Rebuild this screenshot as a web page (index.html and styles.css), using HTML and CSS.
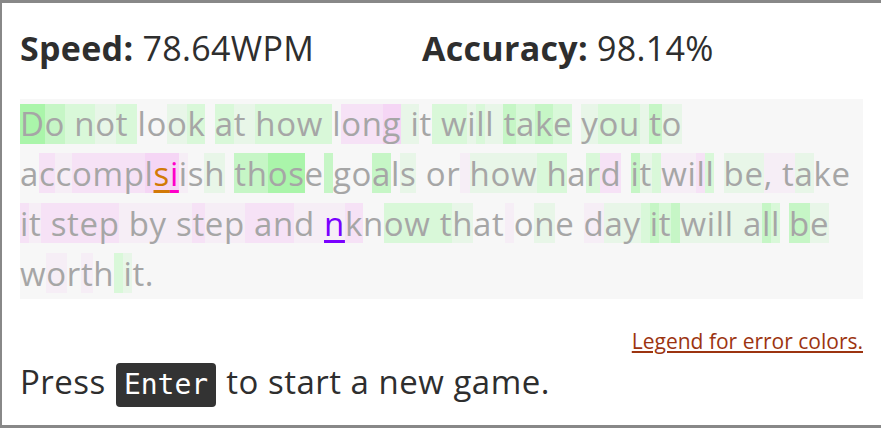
FILE: index.html
```html
<!DOCTYPE html>
<html lang="en">
<head>
<meta charset="utf-8">
<title>Typing game</title>
<link rel="stylesheet" href="styles.css">
</head>
<body>
<div class="frame">
  <div class="stats">
    <div><b>Speed:</b> 78.64WPM</div>
    <div><b>Accuracy:</b> 98.14%</div>
  </div>
  <div class="tx"><span class="a">D</span><span class="b">o</span><span class="c"> </span><span class="c">n</span><span class="d">o</span><span class="c">t</span><span class="c"> </span>lo<span class="d">o</span><span class="c">k</span> <span class="c">a</span><span class="d">t</span><span class="d"> </span><span class="c">h</span><span class="c">o</span><span class="c">w</span><span class="c"> </span>l<span class="p">o</span><span class="p">n</span><span class="q">g</span><span class="d"> </span><span class="d">i</span>t<span class="c"> </span><span class="c">w</span><span class="d">i</span><span class="c">l</span><span class="d">l</span><span class="d"> </span><span class="b">t</span><span class="c">a</span><span class="b">k</span><span class="c">e</span> <span class="d">y</span><span class="c">o</span><span class="c">u</span><span class="d"> </span><span class="b">t</span><span class="d">o</span> <br>a<span class="p">c</span><span class="r">c</span><span class="p">o</span><span class="p">m</span><span class="p">p</span><span class="q">l</span><span class="q e1">s</span><span class="q e2">i</span><span class="r">i</span>s<span class="d">h</span> <span class="b">t</span><span class="b">h</span><span class="a">o</span><span class="a">s</span>e<span class="b"> </span>go<span class="b">a</span>l<span class="d">s</span> or<span class="r"> </span><span class="d">h</span><span class="d">o</span><span class="d">w</span><span class="c"> </span><span class="c">h</span>a<span class="c">r</span><span class="p">d</span> <span class="b">i</span><span class="d">t</span><span class="c"> </span><span class="r">w</span><span class="r">i</span><span class="p">l</span><span class="c">l</span> <span class="d">b</span><span class="d">e</span><span class="r">,</span><span class="r"> </span><span class="r">t</span><span class="d">a</span>ke <br><span class="p">i</span><span class="r">t</span><span class="p"> </span><span class="p">s</span><span class="p">t</span><span class="p">e</span><span class="p">p</span><span class="r"> </span><span class="r">b</span><span class="r">y</span><span class="r"> </span><span class="r">s</span><span class="p">t</span><span class="r">e</span><span class="r">p</span><span class="p"> </span><span class="p">a</span><span class="p">n</span><span class="r">d</span><span class="r"> </span><span class="r e3">n</span><span class="p">k</span>n<span class="c">o</span><span class="c">w</span><span class="c"> </span><span class="c">t</span><span class="d">h</span>at<span class="r"> </span>o<span class="d">n</span>e <span class="r">d</span><span class="d">a</span><span class="d">y</span><span class="c"> </span><span class="b">i</span><span class="c">t</span><span class="b"> </span><span class="d">w</span><span class="d">i</span><span class="d">l</span><span class="d">l</span><span class="d"> </span><span class="d">a</span><span class="b">l</span><span class="c">l</span> <span class="b">b</span><span class="d">e</span> <br>w<span class="r">o</span>r<span class="r">t</span>h<span class="c"> </span><span class="d">i</span>t.</div>
  <div class="legend"><a href="#legend">Legend for error colors.</a></div>
  <div class="press">Press <kbd class="key">Enter</kbd> to start a new game.</div>
</div>
</body>
</html>
```
FILE: styles.css
```css
html, body {
  margin: 0;
  padding: 0;
  overflow: hidden;
  background: #fff;
}
.frame {
  box-sizing: border-box;
  width: 881px;
  height: 428px;
  border: solid #888;
  border-width: 3px 0 3px 2px;
  padding: 22px 18px 0 18px;
  font-family: "Open Sans", "Noto Sans", sans-serif;
  color: #2e2e2e;
}
.stats {
  display: grid;
  grid-template-columns: 402px auto;
  font-size: 34px;
  line-height: 46px;
  letter-spacing: 0.3px;
  height: 46px;
}
.stats b {
  font-weight: 700;
}
.tx {
  margin-top: 28px;
  height: 200px;
  background: #f7f7f7;
  font-size: 33px;
  line-height: 50px;
  letter-spacing: 0.65px;
  color: #a6a6a6;
  white-space: nowrap;
}
.tx span {
  background-image: linear-gradient(to bottom, transparent 2.5px, var(--bg) 2.5px, var(--bg) calc(100% - 2.5px), transparent calc(100% - 2.5px));
}
.a { --bg: #aaf5aa; }
.b { --bg: #c6f6c6; }
.c { --bg: #d9f8d9; }
.d { --bg: #e8f6e8; }
.p { --bg: #f6e2f6; }
.q { --bg: #f5d6f5; }
.r { --bg: #f6eef6; }
.e1, .e2, .e3 {
  text-decoration-line: underline;
  text-decoration-thickness: 3px;
  text-underline-offset: 4px;
}
.e1 { color: #d27a06; }
.e2 { color: #ff00c8; }
.e3 { color: #7a00ff; }
.legend {
  margin-top: 27px;
  text-align: right;
  font-size: 21px;
  line-height: 30px;
}
.legend a {
  color: #9c3410;
  text-decoration: underline;
  text-underline-offset: 2px;
}
.press {
  margin-top: 4px;
  font-size: 33px;
  line-height: 44px;
  letter-spacing: 0.5px;
}
.key {
  display: inline-block;
  height: 44px;
  padding: 0 8px;
  margin: 0 1px;
  background: #333;
  color: #fff;
  border-radius: 4px;
  font-family: "DejaVu Sans Mono", "Liberation Mono", monospace;
  font-size: 28px;
  line-height: 44px;
  letter-spacing: 0;
}
```
